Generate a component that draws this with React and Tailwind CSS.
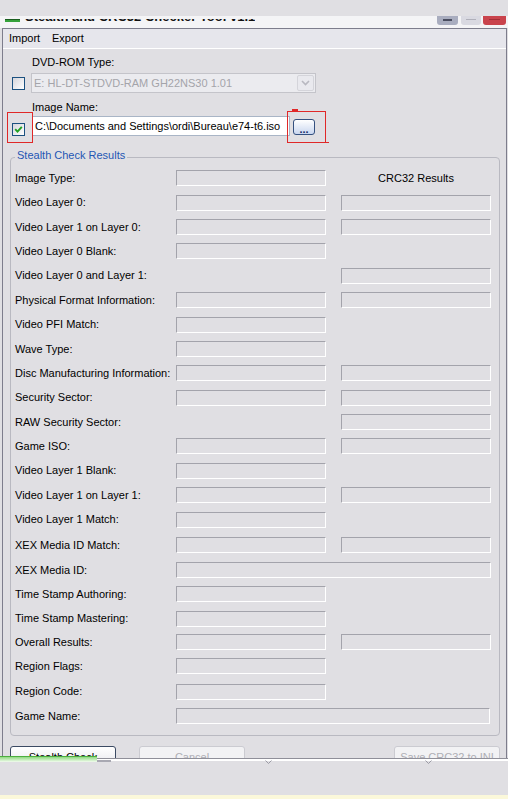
import React from "react";

const rows = [
  { label: "Image Type:", h: "h-[24px]", f1: true, crc: true },
  { label: "Video Layer 0:", h: "h-[25px]", f1: true, f2: true },
  { label: "Video Layer 1 on Layer 0:", h: "h-[24px]", f1: true, f2: true },
  { label: "Video Layer 0 Blank:", h: "h-[24px]", f1: true },
  { label: "Video Layer 0 and Layer 1:", h: "h-[25px]", f2: true },
  { label: "Physical Format Information:", h: "h-[24px]", f1: true, f2: true },
  { label: "Video PFI Match:", h: "h-[25px]", f1: true },
  { label: "Wave Type:", h: "h-[24px]", f1: true },
  { label: "Disc Manufacturing Information:", h: "h-[24px]", f1: true, f2: true },
  { label: "Security Sector:", h: "h-[25px]", f1: true, f2: true },
  { label: "RAW Security Sector:", h: "h-[24px]", f2: true },
  { label: "Game ISO:", h: "h-[24px]", f1: true, f2: true },
  { label: "Video Layer 1 Blank:", h: "h-[25px]", f1: true },
  { label: "Video Layer 1 on Layer 1:", h: "h-[24px]", f1: true, f2: true },
  { label: "Video Layer 1 Match:", h: "h-[25px]", f1: true },
  { label: "XEX Media ID Match:", h: "h-[26px]", f1: true, f2: true },
  { label: "XEX Media ID:", h: "h-[24px]", wide: "w-[315px]" },
  { label: "Time Stamp Authoring:", h: "h-[24px]", f1: true },
  { label: "Time Stamp Mastering:", h: "h-[25px]", f1: true },
  { label: "Overall Results:", h: "h-[22px]", f1: true, f2: true },
  { label: "Region Flags:", h: "h-[26px]", f1: true },
  { label: "Region Code:", h: "h-[25px]", f1: true },
  { label: "Game Name:", h: "h-[24px]", wide: "w-[314px]" },
];

function Field({ w = "w-[150px]" }) {
  return (
    <div
      className={`${w} h-[16px] shrink-0 border-t border-l border-b border-r border-t-[#a3a3ab] border-l-[#a3a3ab] border-b-white border-r-white`}
    />
  );
}

function Checkbox({ checked }) {
  return (
    <div className="w-[13px] h-[13px] shrink-0 border border-[#1c5180] bg-gradient-to-br from-[#d6d6dc] to-white flex items-center justify-center">
      {checked && (
        <svg width="9" height="9" viewBox="0 0 9 9">
          <path d="M1.2 4.2 L3.5 6.6 L7.8 1.8" stroke="#21a121" strokeWidth="1.9" fill="none" />
        </svg>
      )}
    </div>
  );
}

export default function App() {
  return (
    <div className="relative w-[508px] h-[799px] overflow-hidden bg-[#e0dfe3] font-['Liberation_Sans',Arial,sans-serif] text-[11px] text-black">
      {/* top strip */}
      <div className="h-[16px]" />
      {/* title bar remnant */}
      <div className="flex h-[12px] bg-[#f4f4f6]">
        <div className="flex-1 flex items-start pl-[5px] pt-[3px]">
          <div className="w-[15px] h-[3px] bg-[#35a13a] border-t border-[#1b5e20]" />
          <div className="ml-[5px] h-[3px] overflow-hidden">
            <div className="-mt-[9px] leading-[13px] text-[13px] font-bold whitespace-nowrap text-[#111]">
              Stealth and CRC32 Checker Tool v1.1
            </div>
          </div>
        </div>
        <div className="flex items-start pr-[2px]">
          <div className="w-[21px] h-[9px] rounded-b-[3px] bg-[#a9adbf] flex justify-center">
            <div className="mt-[3px] w-[9px] h-[2px] bg-[#4a4d60]" />
          </div>
          <div className="ml-[3px] w-[20px] h-[9px] rounded-b-[3px] bg-[#d9d9e1] flex justify-center">
            <div className="mt-[3px] w-[10px] h-[1px] bg-[#b0b0ba]" />
          </div>
          <div className="ml-[2px] w-[23px] h-[9px] rounded-b-[3px] bg-[#c9434c] flex justify-center">
            <div className="mt-[3px] w-[11px] h-[1px] bg-[#a32e36]" />
          </div>
        </div>
      </div>

      {/* window */}
      <div className="ml-[2px] mr-[1px] h-[730px] border-t border-l border-r border-[#7d7d8c] overflow-hidden">
        {/* menu */}
        <div className="h-[20px] bg-[#e6e6ec] border-b border-white flex items-center pl-[6px]">
          <span className="w-[43px]">Import</span>
          <span>Export</span>
        </div>

        <div className="pt-[7px]">
          <div className="pl-[29px] h-[13px] leading-[13px]">DVD-ROM Type:</div>
          <div className="mt-[4px] h-[20px] flex items-center pl-[9px]">
            <Checkbox />
            <div className="ml-[6px] w-[285px] h-[20px] border border-[#c4c4ca] bg-[#ebebef] flex items-center">
              <span className="flex-1 pl-[2px] text-[#a4a4aa] whitespace-nowrap">E: HL-DT-STDVD-RAM GH22NS30 1.01</span>
              <div className="w-[17px] h-[16px] mr-[1px] rounded-[2px] border border-[#d4d4da] bg-[#e9e9ee] flex items-center justify-center">
                <svg width="9" height="6" viewBox="0 0 9 6">
                  <path d="M1 1 L4.5 4.5 L8 1" stroke="#b8b8c0" strokeWidth="1.6" fill="none" />
                </svg>
              </div>
            </div>
          </div>

          <div className="mt-[8px] pl-[29px] h-[13px] leading-[13px]">Image Name:</div>
          <div className="mt-[2px] h-[20px] flex items-start pl-[9px]">
            <div className="mt-[7px]">
              <Checkbox checked />
            </div>
            <div className="ml-[7px] w-[258px] h-[20px] bg-white border border-[#a9b5c6] flex items-center pl-[2px] text-[11px] whitespace-nowrap overflow-hidden">
              {"C:\\Documents and Settings\\ordi\\Bureau\\e74-t6.iso"}
            </div>
            <div className="ml-[3px] mt-[3px] w-[22px] h-[16px] rounded-[3px] border border-[#34507f] bg-gradient-to-b from-white to-[#c9d6ef] flex items-end justify-center text-[#1a2f66] leading-[10px] font-bold">
              ...
            </div>
          </div>

          {/* group box */}
          <div className="relative mt-[21px] ml-[7px] w-[490px] border border-[#b9b9c1] rounded-[4px] pt-[8px] pb-[7px]">
            <div className="absolute top-[-9px] left-[4px] px-[2px] bg-[#e0dfe3] leading-[13px] text-[#1f56b4]">
              Stealth Check Results
            </div>
            {rows.map((r) => (
              <div key={r.label} className={`${r.h} flex items-center`}>
                <div className="w-[165px] pl-[4px] shrink-0 whitespace-nowrap">{r.label}</div>
                {r.wide ? (
                  <Field w={r.wide} />
                ) : (
                  <>
                    <div className="w-[150px] shrink-0">{r.f1 && <Field />}</div>
                    <div className="ml-[15px] w-[150px] shrink-0">
                      {r.f2 && <Field />}
                      {r.crc && <div className="text-center">CRC32 Results</div>}
                    </div>
                  </>
                )}
              </div>
            ))}
          </div>

          {/* buttons */}
          <div className="mt-[10px] ml-[7px] w-[490px] flex">
            <div className="w-[106px] h-[23px] rounded-[3px] border border-[#3b4a63] bg-gradient-to-b from-white to-[#e4e4ea] flex items-center justify-center">
              Stealth Check
            </div>
            <div className="ml-[23px] w-[106px] h-[23px] rounded-[3px] border border-[#cbcbd1] bg-[#f2f2f4] flex items-center justify-center text-[#aeaeb4]">
              Cancel
            </div>
            <div className="ml-auto w-[106px] h-[23px] rounded-[3px] border border-[#cbcbd1] bg-[#f2f2f4] flex items-center justify-center text-[#aeaeb4]">
              Save CRC32 to INI
            </div>
          </div>
        </div>
      </div>

      {/* bottom strip */}
      <div className="relative h-[41px]">
        <div className="h-[1px] bg-[#8f8f99]" />
        <div className="h-[2px] bg-white" />
        <div className="h-[34px] bg-[#e0dfe3]" />
        <div className="h-[4px] bg-[#fbf8da]" />
        <div className="absolute left-0 top-[-2px] w-[97px] h-[6px] border-t border-[#4cae3f] bg-gradient-to-b from-[#8fd97f] to-[#f2fbef]" />
        <div className="absolute left-[97px] top-[2px] w-[14px] h-[2px] bg-[#a8a8b2]" />
        <svg className="absolute left-[265px] top-[2px]" width="7" height="4" viewBox="0 0 7 4">
          <path d="M0.5 0.5 L3.5 3.5 L6.5 0.5" stroke="#9a9aa4" strokeWidth="1" fill="none" />
        </svg>
        <svg className="absolute left-[425px] top-[2px]" width="7" height="4" viewBox="0 0 7 4">
          <path d="M0.5 0.5 L3.5 3.5 L6.5 0.5" stroke="#9a9aa4" strokeWidth="1" fill="none" />
        </svg>
      </div>

      {/* red annotation boxes */}
      <div className="absolute left-[7px] top-[112px] w-[26px] h-[31px] border border-[#e02828]" />
      <div className="absolute left-[287px] top-[111px] w-[39px] h-[32px] border border-[#e02828]" />
      <div className="absolute left-[326px] top-[142px] w-[3px] h-[1px] bg-[#e02828]" />
      <div className="absolute left-[292px] top-[109px] w-[6px] h-[2px] bg-[#e02828]" />
    </div>
  );
}
